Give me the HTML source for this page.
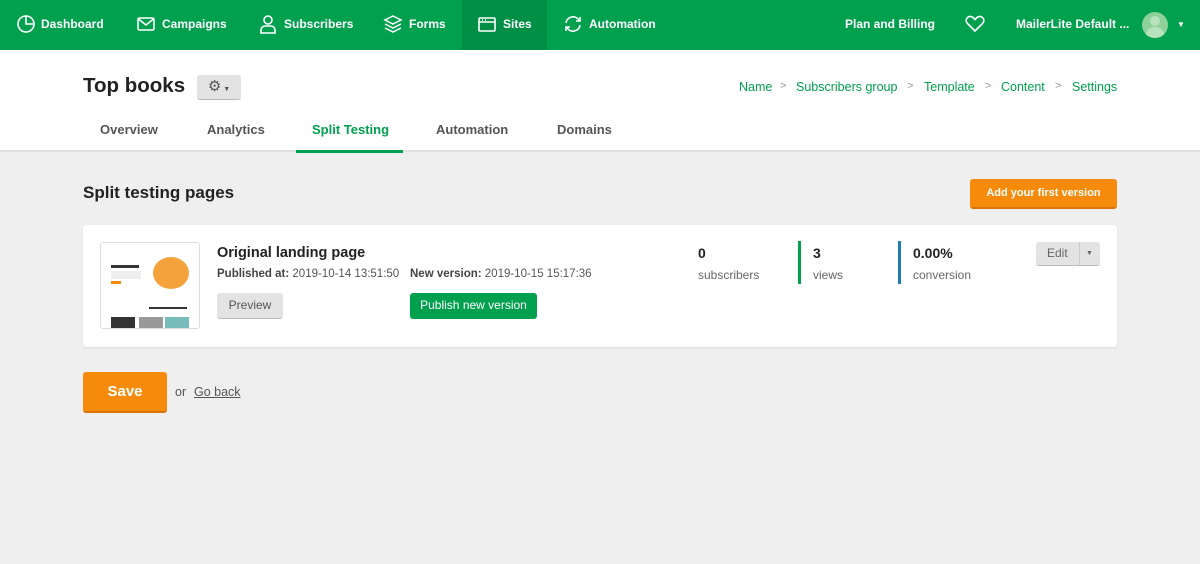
<!DOCTYPE html>
<html><head><meta charset="utf-8"><style>
*{box-sizing:border-box;margin:0;padding:0}
body{width:1200px;height:564px;background:#efefef;font-family:"Liberation Sans",sans-serif;position:relative;overflow:hidden;color:#222}
.a{position:absolute;white-space:nowrap}
.nav{position:absolute;left:0;top:0;width:1200px;height:50px;background:#00a04e}
.nav .t{position:absolute;top:17px;color:#fff;font-weight:bold;font-size:12px}
.nav svg{position:absolute;top:14px}
.hdr{position:absolute;left:0;top:50px;width:1200px;height:102px;background:#fff;border-bottom:2px solid #e0e0e0}
.bc{color:#00a04e;font-size:12.5px;top:80px}
.bs{color:#999;font-size:11px;top:80px}
.tab{top:122px;font-size:13px;font-weight:bold;color:#555}
.btn{position:absolute;border-radius:3px;font-size:12px;text-align:center}
</style></head><body>
<div class="nav">
<div style="position:absolute;left:462px;top:0;width:85px;height:50px;background:#008f45"></div>
<svg style="left:16px" width="20" height="20" viewBox="0 0 20 20" fill="none" stroke="#fff" stroke-width="1.6"><circle cx="10" cy="10" r="8"/><path d="M10 2v8h8"/></svg>
<div class="t" style="left:41px">Dashboard</div>
<svg style="left:136px" width="20" height="20" viewBox="0 0 20 20" fill="none" stroke="#fff" stroke-width="1.6"><rect x="2" y="4" width="16" height="12" rx="1.5"/><path d="M2.5 5l7.5 6 7.5-6"/></svg>
<div class="t" style="left:162px">Campaigns</div>
<svg style="left:258px" width="20" height="20" viewBox="0 0 20 20" fill="none" stroke="#fff" stroke-width="1.6"><circle cx="10" cy="6" r="4"/><path d="M3 19v-3a4 4 0 014-4h6a4 4 0 014 4v3z"/></svg>
<div class="t" style="left:284px">Subscribers</div>
<svg style="left:383px" width="20" height="20" viewBox="0 0 20 20" fill="none" stroke="#fff" stroke-width="1.5"><path d="M10 2l8 4-8 4-8-4z M2 10l8 4 8-4 M2 14l8 4 8-4"/></svg>
<div class="t" style="left:409px">Forms</div>
<svg style="left:477px" width="20" height="20" viewBox="0 0 20 20" fill="none" stroke="#fff" stroke-width="1.6"><rect x="2" y="4" width="16" height="13" rx="1"/><path d="M2 8h16M5 6h1M8 6h1"/></svg>
<div class="t" style="left:503px">Sites</div>
<svg style="left:563px" width="20" height="20" viewBox="0 0 20 20" fill="none" stroke="#fff" stroke-width="1.6"><path d="M3 9a7 7 0 0112-4l2 2M17 3v4h-4M17 11a7 7 0 01-12 4l-2-2M3 17v-4h4"/></svg>
<div class="t" style="left:589px">Automation</div>
<div class="t" style="left:845px">Plan and Billing</div>
<svg style="left:965px;top:15px" width="20" height="18" viewBox="0 0 20 18" fill="none" stroke="#fff" stroke-width="1.6"><path d="M10 16L2.5 8.5a4 4 0 015.5-6L10 4.5l2-2a4 4 0 015.5 6z"/></svg>
<div class="t" style="left:1016px;width:118px;overflow:hidden">MailerLite Default ...</div>
<div style="position:absolute;left:1142px;top:12px;width:26px;height:26px;border-radius:50%;background:#8fd19a;overflow:hidden"><div style="position:absolute;left:8px;top:4px;width:10px;height:10px;border-radius:50%;background:#b9e3bf"></div><div style="position:absolute;left:4px;top:15px;width:18px;height:14px;border-radius:50%;background:#b9e3bf"></div></div>
<div class="t" style="left:1177px;font-size:8px;top:20px">▼</div>
</div>
<div class="hdr"></div>
<div class="a" style="left:83px;top:74px;font-size:20.5px;font-weight:bold">Top books</div>
<div class="btn" style="left:197px;top:75px;width:44px;height:25px;background:#e3e3e3;border-bottom:1px solid #bbb;font-size:15px;color:#555;line-height:24px">⚙<span style="font-size:7px"> ▼</span></div>
<div class="a bc" style="left:739px">Name</div><div class="a bs" style="left:780px">&gt;</div>
<div class="a bc" style="left:796px">Subscribers group</div><div class="a bs" style="left:907px">&gt;</div>
<div class="a bc" style="left:924px">Template</div><div class="a bs" style="left:985px">&gt;</div>
<div class="a bc" style="left:1001px">Content</div><div class="a bs" style="left:1055px">&gt;</div>
<div class="a bc" style="left:1072px">Settings</div>
<div class="a tab" style="left:100px">Overview</div>
<div class="a tab" style="left:207px">Analytics</div>
<div class="a tab" style="left:312px;color:#00a04e">Split Testing</div>
<div style="position:absolute;left:296px;top:150px;width:107px;height:3px;background:#00a04e"></div>
<div class="a tab" style="left:436px">Automation</div>
<div class="a tab" style="left:557px">Domains</div>
<div class="a" style="left:83px;top:183px;font-size:17px;font-weight:bold">Split testing pages</div>
<div class="btn" style="left:970px;top:179px;width:147px;height:30px;background:#f68b0b;border-bottom:2px solid #d9730a;color:#fff;font-weight:bold;line-height:28px;font-size:11px">Add your first version</div>
<div style="position:absolute;left:83px;top:225px;width:1034px;height:122px;background:#fff;border-radius:4px;box-shadow:0 1px 2px rgba(0,0,0,.08)"></div>
<div style="position:absolute;left:100px;top:242px;width:100px;height:87px;border:1px solid #ddd;border-radius:3px;background:#fff;overflow:hidden">
<div style="position:absolute;left:10px;top:22px;width:28px;height:3px;background:#333"></div>
<div style="position:absolute;left:10px;top:28px;width:30px;height:8px;background:#eee"></div>
<div style="position:absolute;left:10px;top:38px;width:10px;height:3px;background:#f68b0b"></div>
<div style="position:absolute;left:52px;top:14px;width:36px;height:32px;border-radius:50%;background:#f4a23c"></div>
<div style="position:absolute;left:48px;top:64px;width:38px;height:2px;background:#333"></div>
<div style="position:absolute;left:10px;top:74px;width:24px;height:12px;background:#333"></div>
<div style="position:absolute;left:38px;top:74px;width:24px;height:12px;background:#999"></div>
<div style="position:absolute;left:64px;top:74px;width:24px;height:12px;background:#7bb"></div>
</div>
<div class="a" style="left:217px;top:245px;font-size:14.5px;font-weight:bold">Original landing page</div>
<div class="a" style="left:217px;top:268px;font-size:11.5px;color:#555"><b style="color:#444">Published at:</b> 2019-10-14 13:51:50</div>
<div class="a" style="left:410px;top:268px;font-size:11.5px;color:#555"><b style="color:#444">New version:</b> 2019-10-15 15:17:36</div>
<div class="btn" style="left:217px;top:293px;width:66px;height:26px;background:#e3e3e3;border-bottom:1px solid #bbb;color:#555;line-height:25px">Preview</div>
<div class="btn" style="left:410px;top:293px;width:127px;height:26px;background:#00a04e;color:#fff;line-height:25px">Publish new version</div>
<div class="a" style="left:698px;top:245px;font-size:14px;font-weight:bold">0</div>
<div class="a" style="left:698px;top:268px;font-size:12px;color:#666">subscribers</div>
<div style="position:absolute;left:798px;top:241px;width:3px;height:43px;background:#00a04e"></div>
<div class="a" style="left:813px;top:245px;font-size:14px;font-weight:bold">3</div>
<div class="a" style="left:813px;top:268px;font-size:12px;color:#666">views</div>
<div style="position:absolute;left:898px;top:241px;width:3px;height:43px;background:#1e7db3"></div>
<div class="a" style="left:913px;top:245px;font-size:14px;font-weight:bold">0.00%</div>
<div class="a" style="left:913px;top:268px;font-size:12px;color:#666">conversion</div>
<div class="btn" style="left:1036px;top:242px;width:64px;height:24px;background:#e3e3e3;border-bottom:1px solid #bbb;color:#666;line-height:23px;text-align:left;padding-left:11px">Edit<span style="position:absolute;left:43px;top:0;width:1px;height:23px;background:#ccc"></span><span style="position:absolute;left:50px;font-size:7px">▼</span></div>
<div class="btn" style="left:83px;top:372px;width:84px;height:41px;background:#f68b0b;border-bottom:2px solid #d9730a;color:#fff;font-weight:bold;font-size:15px;line-height:39px">Save</div>
<div class="a" style="left:175px;top:385px;font-size:12.5px;color:#555">or</div>
<div class="a" style="left:194px;top:385px;font-size:12.5px;color:#555;text-decoration:underline">Go back</div>
</body></html>
